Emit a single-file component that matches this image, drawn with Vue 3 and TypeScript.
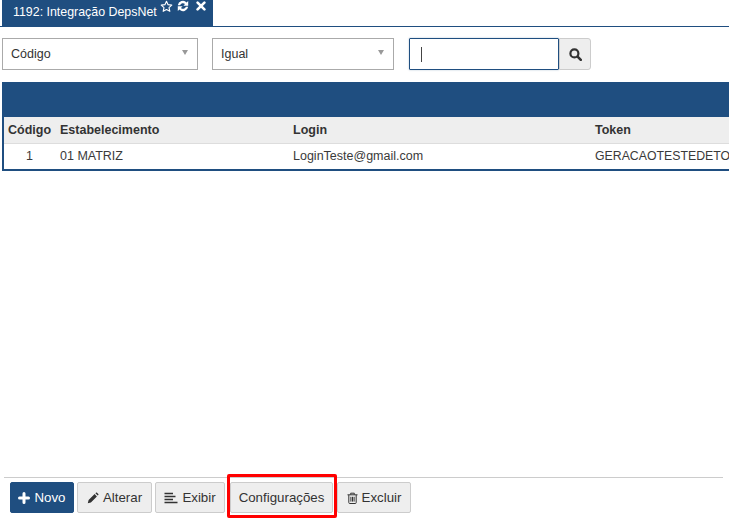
<script setup lang="ts">
const columns = ['Código', 'Estabelecimento', 'Login', 'Token']
const row = ['1', '01 MATRIZ', 'LoginTeste@gmail.com', 'GERACAOTESTEDETOKEN']
</script>

<template>
  <div class="page">
    <div class="tabs">
      <div class="tab">
        <span class="tab-title">1192: Integração DepsNet</span>
        <svg class="ti star" viewBox="0 0 14 14" width="13" height="13"><path d="M7 1.3l1.7 3.7 4 .5-3 2.7.9 4L7 10.2l-3.6 2 .9-4-3-2.7 4-.5z" fill="none" stroke="#fff" stroke-width="1.2" stroke-linejoin="round"/></svg>
        <svg class="ti sync" viewBox="0 0 12 12" width="12" height="12"><path d="M.8 5.2A5.2 5.2 0 0 1 9.6 2.4L11.2.9V5.8H6.4L8 4.1A3 3 0 0 0 3.1 5.2zM11.2 6.8A5.2 5.2 0 0 1 2.4 9.6L.8 11.1V6.2H5.6L4 7.9A3 3 0 0 0 8.9 6.8z" fill="#fff"/></svg>
        <svg class="ti close" viewBox="0 0 10 10" width="10" height="10"><path d="M1.6 1.6l6.8 6.8M8.4 1.6L1.6 8.4" stroke="#fff" stroke-width="2.6" stroke-linecap="round"/></svg>
      </div>
    </div>

    <div class="filters">
      <div class="select first"><span>Código</span><i class="caret"></i></div>
      <div class="select second"><span>Igual</span><i class="caret"></i></div>
      <div class="search-box"><span class="cursor"></span></div>
      <button class="search-btn" type="button" aria-label="Buscar">
        <svg viewBox="0 0 13 13" width="13" height="13"><circle cx="5.4" cy="5.4" r="4" fill="none" stroke="#333" stroke-width="2.2"/><path d="M8.6 8.6l3.2 3.2" stroke="#333" stroke-width="2.6" stroke-linecap="round"/></svg>
      </button>
    </div>

    <div class="grid">
      <div class="grid-bar"></div>
      <div class="grid-body">
        <div class="g-row g-head">
          <div v-for="(c, i) in columns" :key="c" class="cell" :class="'c' + i">{{ c }}</div>
        </div>
        <div class="g-row g-data">
          <div v-for="(c, i) in row" :key="c" class="cell" :class="'c' + i">{{ c }}</div>
        </div>
      </div>
    </div>

    <div class="spacer"></div>

    <div class="footer">
      <button class="btn primary" type="button">
        <svg viewBox="0 0 12 12" width="12" height="12"><path d="M6 1.5v9M1.5 6h9" stroke="#fff" stroke-width="3" stroke-linecap="round"/></svg>
        Novo
      </button>
      <button class="btn alterar" type="button">
        <svg viewBox="0 0 12 12" width="12" height="12"><path d="M.8 11.2l.8-3.1 6-6 2.3 2.3-6 6zM8.4 1.3l.6-.6c.3-.3.7-.3 1 0l1.3 1.3c.3.3.3.7 0 1l-.6.6z" fill="#333"/></svg>
        Alterar
      </button>
      <button class="btn exibir" type="button">
        <svg viewBox="0 0 14 12" width="14" height="12"><path d="M.5 1.5h8.5M.5 4.5h11M.5 7.5h8.5M.5 10.5h13" stroke="#333" stroke-width="1.7"/></svg>
        Exibir
      </button>
      <div class="highlight">
        <button class="btn config" type="button">Configurações</button>
      </div>
      <button class="btn excluir" type="button">
        <svg viewBox="0 0 11 12" width="11" height="12"><path d="M.5 2.8h10M3.7 2.6V1.2h3.6v1.4M1.8 3v7.6c0 .6.3.9.8.9h5.8c.5 0 .8-.3.8-.9V3M3.9 4.8v4.8M5.5 4.8v4.8M7.1 4.8v4.8" fill="none" stroke="#333" stroke-width="1"/></svg>
        Excluir
      </button>
    </div>
  </div>
</template>

<style>
html, body { margin: 0; background: #fff; overflow: hidden; }
</style>

<style scoped>
.page {
  width: 729px;
  height: 521px;
  display: flex;
  flex-direction: column;
  font-family: "Liberation Sans", Arial, sans-serif;
  font-size: 12.5px;
  color: #333;
  overflow: hidden;
  box-sizing: border-box;
}
.tabs {
  height: 27px;
  border-bottom: 1px solid #1f4e80;
  box-sizing: border-box;
  padding-left: 2px;
  flex: none;
}
.tab {
  width: 211px;
  height: 26px;
  background: #1f4e80;
  color: #fff;
  position: relative;
  box-sizing: border-box;
  padding: 5px 0 0 11px;
  font-size: 12.4px;
  line-height: 15px;
  white-space: nowrap;
}
.ti { position: absolute; }
.star { left: 158px; top: 0; }
.sync { left: 175px; top: 0; }
.close { left: 194px; top: 1px; }
.filters {
  flex: none;
  display: flex;
  align-items: center;
  height: 32px;
  margin-top: 11px;
  padding-left: 2px;
}
.select {
  height: 32px;
  box-sizing: border-box;
  border: 1px solid #aaa;
  background: #fff;
  display: flex;
  align-items: center;
  justify-content: space-between;
  padding: 0 9px 0 8px;
}
.first { width: 196px; margin-right: 14px; }
.second { width: 182px; margin-right: 15px; }
.caret {
  width: 0;
  height: 0;
  margin-bottom: 3px;
  border-left: 3.5px solid transparent;
  border-right: 3.5px solid transparent;
  border-top: 5px solid #999;
}
.search-box {
  width: 150px;
  height: 32px;
  box-sizing: border-box;
  border: 1px solid #1f4e80;
  border-radius: 1px;
  box-shadow: 0 0 2px rgba(31, 78, 128, 0.35);
  display: flex;
  align-items: center;
  padding-left: 11px;
}
.cursor { width: 1px; height: 15px; background: #444; }
.search-btn {
  width: 32px;
  height: 32px;
  padding: 0;
  background: #eee;
  border: 1px solid #ccc;
  border-radius: 0 3px 3px 0;
  display: flex;
  align-items: center;
  justify-content: center;
}
.grid {
  flex: none;
  margin: 12px 0 0 2px;
  width: 727px;
}
.grid-bar { height: 35px; background: #1f4e80; }
.grid-body {
  border-left: 2px solid #1f4e80;
  border-bottom: 2px solid #1f4e80;
}
.g-row { display: flex; white-space: nowrap; overflow: hidden; }
.g-head {
  height: 27px;
  line-height: 26px;
  background: #eee;
  border-bottom: 1px solid #ddd;
  box-sizing: border-box;
  font-weight: bold;
}
.g-data { height: 25px; line-height: 25px; color: #3a3a3a; }
.cell { flex: none; box-sizing: border-box; }
.c0 { width: 52px; padding-left: 4px; }
.g-data .c0 { padding-left: 0; text-indent: 22px; }
.c1 { width: 233px; padding-left: 4px; }
.c2 { width: 301px; padding-left: 4px; }
.c3 { width: 141px; padding-left: 5px; }
.g-data .c3 { font-size: 12.3px; }
.spacer { flex: 1; }
.footer {
  flex: none;
  margin: 0 6px 0 4px;
  height: 44px;
  border-top: 1px solid #ccc;
  display: flex;
  align-items: flex-start;
  padding: 4px 0 0 6px;
  box-sizing: border-box;
}
.btn {
  height: 31px;
  box-sizing: border-box;
  border: 1px solid #ccc;
  border-radius: 2px;
  background: #eee;
  color: #333;
  font-family: inherit;
  font-size: 13.3px;
  padding: 0;
  display: flex;
  align-items: center;
  justify-content: center;
  gap: 4px;
}
.primary { width: 64px; background: #1f4e80; border-color: #1f4e80; color: #fff; margin-right: 3px; }
.alterar { width: 75px; margin-right: 3px; }
.exibir { width: 70px; margin-right: 2px; }
.highlight {
  margin-top: -8px;
  border: 3px solid #f00;
  border-radius: 2px;
  padding: 5px 1px 0 0;
  height: 44px;
  box-sizing: border-box;
}
.config { width: 103px; }
.excluir { width: 74px; }
</style>
